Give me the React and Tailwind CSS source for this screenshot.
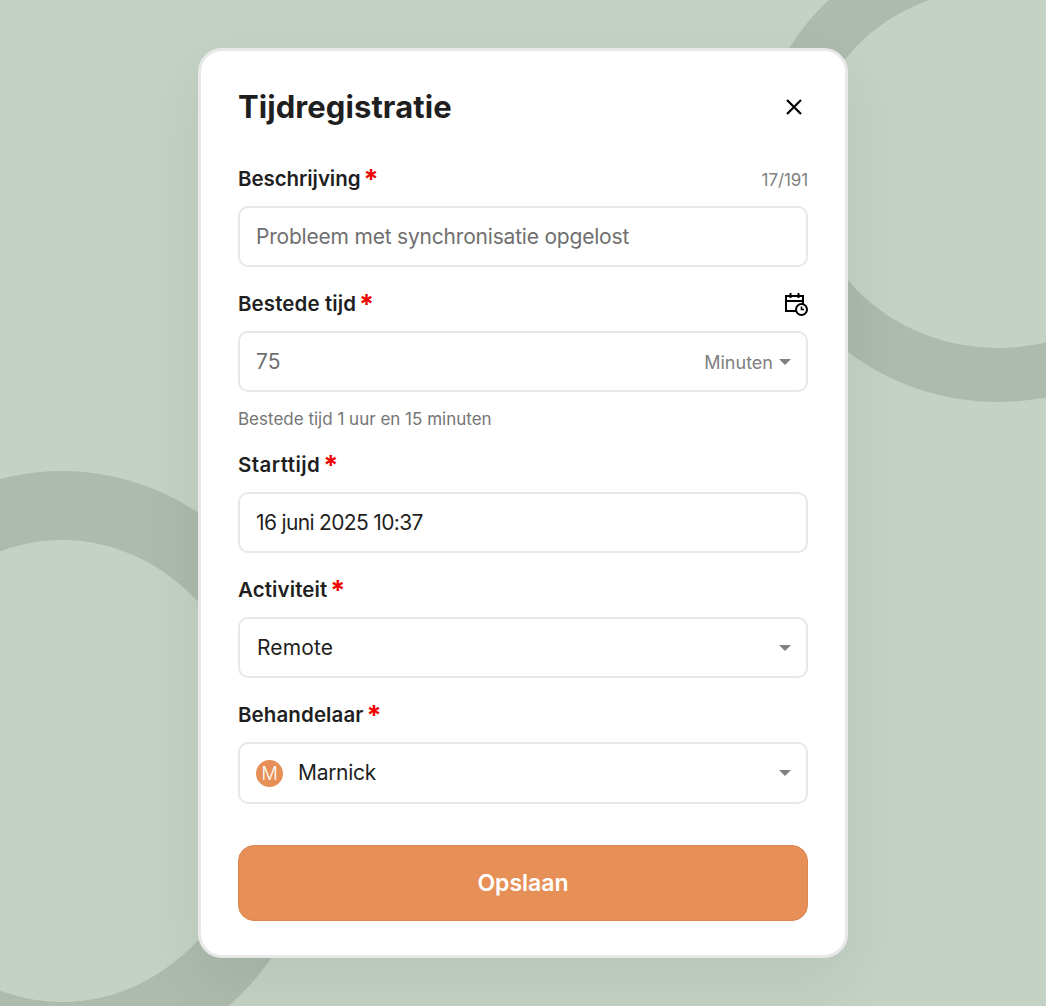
import React from "react";

function Label({ children, extra, track = "tracking-[0.1px]" }) {
  return (
    <div className="flex items-start justify-between h-[26px]">
      <div className="flex items-start">
        <span className={`text-[20.5px] leading-[26px] font-semibold text-[#1f1f1f] ${track}`}>{children}</span>
        <span className="ml-[3px] mt-[1px] text-[27px] leading-[26px] font-bold text-[#f00000]">*</span>
      </div>
      {extra}
    </div>
  );
}

function Caret() {
  return (
    <svg width="12" height="6" viewBox="0 0 12 6" className="shrink-0">
      <path d="M0 0h12L6 6z" fill="#808080" />
    </svg>
  );
}

function Box({ children, tall }) {
  return (
    <div className={`mt-[14px] ${tall ? "h-[62px]" : "h-[61px]"} rounded-[10px] border-2 border-[#e8e8e8] bg-white pl-[16px] pr-[15px] flex items-center justify-between text-[21px]`}>
      {children}
    </div>
  );
}

export default function App() {
  return (
    <div className="relative w-[1046px] h-[1006px] overflow-hidden bg-[#c4d2c5] font-['Inter','Liberation_Sans',sans-serif]">
      <div className="absolute left-[-206px] top-[471px] w-[536px] h-[600px] rounded-[50%] border-x-[68px] border-y-[69px] border-[#adbaae]" />
      <div className="absolute left-[755px] top-[-66px] w-[486px] h-[468px] rounded-[50%] border-x-[51px] border-y-[54px] border-[#adbaae]" />

      <div className="relative flex justify-center pt-[48px]">
        <div className="w-[650px] h-[910px] rounded-[24px] border-[3px] border-[#e8e8e8] bg-white px-[37px] pt-[35px] shadow-[0_24px_70px_rgba(0,0,0,0.07)]">
          <div className="flex items-center justify-between h-[42px]">
            <h1 className="text-[31px] font-bold leading-[42px] text-[#1f1f1f] tracking-[0.08px]">Tijdregistratie</h1>
            <svg width="20" height="20" viewBox="0 0 20 20" className="mr-[4px]" fill="none" stroke="#000" strokeWidth="2.2">
              <path d="M3 3l14 14M17 3L3 17" />
            </svg>
          </div>

          <div className="mt-[38px]">
            <Label track="tracking-[-0.07px]" extra={<span className="text-[17px] leading-[28px] text-[#808080] tracking-[-0.1px]">17/191</span>}>Beschrijving</Label>
            <Box><span className="text-[#6f6f6f] tracking-[-0.2px]">Probleem met synchronisatie opgelost</span></Box>
          </div>

          <div className="mt-[24px]">
            <Label
              extra={
                <svg width="24" height="24" viewBox="0 0 24 24" fill="none" stroke="#000" strokeWidth="2" className="mt-[1px]">
                  <path d="M12 19H2V4h17v8M2 9h17M6.500 1v5M14.500 1v5" />
                  <circle cx="17.500" cy="17.500" r="5.500" fill="#fff" />
                  <path d="M17.500 14.500V17.500h2.500" strokeWidth="1.600" />
                </svg>
              }
            >
              Bestede tijd
            </Label>
            <Box>
              <span className="text-[#6f6f6f]">75</span>
              <span className="flex items-center gap-[6px]">
                <span className="text-[18px] text-[#808080] mt-[1px]">Minuten</span>
                <Caret />
              </span>
            </Box>
            <p className="mt-[15px] text-[17px] leading-[24px] text-[#757575]">Bestede tijd 1 uur en 15 minuten</p>
          </div>

          <div className="mt-[21px]">
            <Label track="tracking-[0.45px]">Starttijd</Label>
            <Box><span className="text-[#1f1f1f] tracking-[-0.66px]">16 juni 2025 10:37</span></Box>
          </div>

          <div className="mt-[24px]">
            <Label>Activiteit</Label>
            <Box>
              <span className="text-[#1f1f1f] tracking-[0.15px] ml-[1px]">Remote</span>
              <Caret />
            </Box>
          </div>

          <div className="mt-[24px]">
            <Label>Behandelaar</Label>
            <Box tall>
              <span className="flex items-center gap-[15px] text-[#1f1f1f]">
                <span className="w-[27px] h-[27px] rounded-full bg-[#e69058] text-white text-[18px] font-light flex items-center justify-center">M</span>
                <span className="tracking-[-0.3px]">Marnick</span>
              </span>
              <Caret />
            </Box>
          </div>

          <button className="mt-[41px] w-full h-[76px] rounded-[16px] bg-[#e69058] border border-[#d98650] text-white text-[23px] font-semibold">
            Opslaan
          </button>
        </div>
      </div>
    </div>
  );
}
